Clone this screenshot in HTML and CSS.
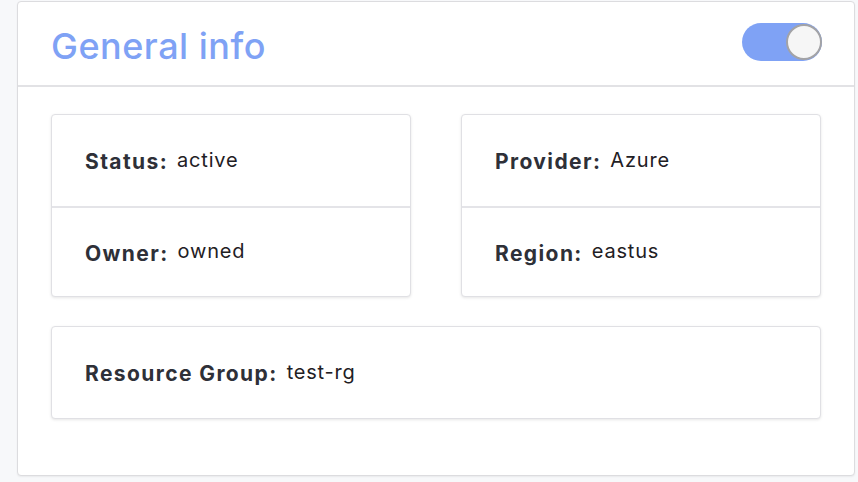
FILE: index.html
```html
<!DOCTYPE html>
<html>
<head>
<meta charset="utf-8">
<link rel="stylesheet" href="styles.css">
</head>
<body>
<div class="panel">
  <div class="panel-header">
    <h2 class="title">General info</h2>
    <div class="toggle"><span class="knob"></span></div>
  </div>
  <div class="panel-body">
    <div class="grid">
      <div class="card">
        <div class="row"><span class="label">Status:</span><span class="value">active</span></div>
        <div class="row"><span class="label">Owner:</span><span class="value">owned</span></div>
      </div>
      <div class="card">
        <div class="row"><span class="label">Provider:</span><span class="value">Azure</span></div>
        <div class="row"><span class="label">Region:</span><span class="value">eastus</span></div>
      </div>
      <div class="card wide">
        <div class="row tall"><span class="label">Resource Group:</span><span class="value">test-rg</span></div>
      </div>
    </div>
  </div>
</div>
</body>
</html>
```
FILE: styles.css
```css
html, body { margin: 0; padding: 0; }
body {
  background: #f7f8fa;
  font-family: Inter, "Noto Sans", sans-serif;
  color: #2e3038;
  padding: 1px 3px 0 17px;
  height: 482px;
  box-sizing: border-box;
}
.panel {
  background: #fff;
  border: 1px solid #dcdcdf;
  border-radius: 4px;
  height: 475px;
  box-sizing: border-box;
  box-shadow: 0 1px 2px rgba(0,0,0,0.06);
}
.panel-header {
  height: 85px;
  border-bottom: 2px solid #e2e2e5;
  display: flex;
  align-items: center;
  justify-content: space-between;
  padding: 0 32px 0 33px;
  box-sizing: border-box;
}
.title {
  margin: 0;
  font-size: 36px;
  font-weight: 500;
  color: #7fa2f5;
  letter-spacing: 0.5px;
  position: relative;
  top: 2px;
}
.toggle {
  width: 80px;
  height: 38px;
  border-radius: 19px;
  background: #7fa2f5;
  display: flex;
  justify-content: flex-end;
  align-items: center;
  position: relative;
  top: -2px;
}
.knob {
  width: 32px;
  height: 32px;
  border-radius: 50%;
  background: #f6f6f6;
  border: 2px solid #a3a3a6;
}
.panel-body {
  padding: 27px 33px 0 33px;
}
.grid {
  display: grid;
  grid-template-columns: 360px 360px;
  column-gap: 50px;
  row-gap: 29px;
}
.card {
  border: 1px solid #e0e0e4;
  border-radius: 4px;
  background: #fff;
  box-shadow: 0 1px 3px rgba(0,0,0,0.1);
}
.card.wide { grid-column: 1 / span 2; }
.row {
  height: 91px;
  display: flex;
  align-items: center;
  padding-left: 33px;
  box-sizing: border-box;
}
.row + .row { border-top: 2px solid #e4e4e8; height: 90px; }
.row.tall { height: 91px; }
.label {
  font-weight: 700;
  font-size: 21px;
  letter-spacing: 1.4px;
  margin-right: 9px;
  position: relative;
  top: 1px;
}
.value {
  font-size: 20px;
  letter-spacing: 0.8px;
  position: relative;
  top: -1px;
  color: #1f2024;
}
```
